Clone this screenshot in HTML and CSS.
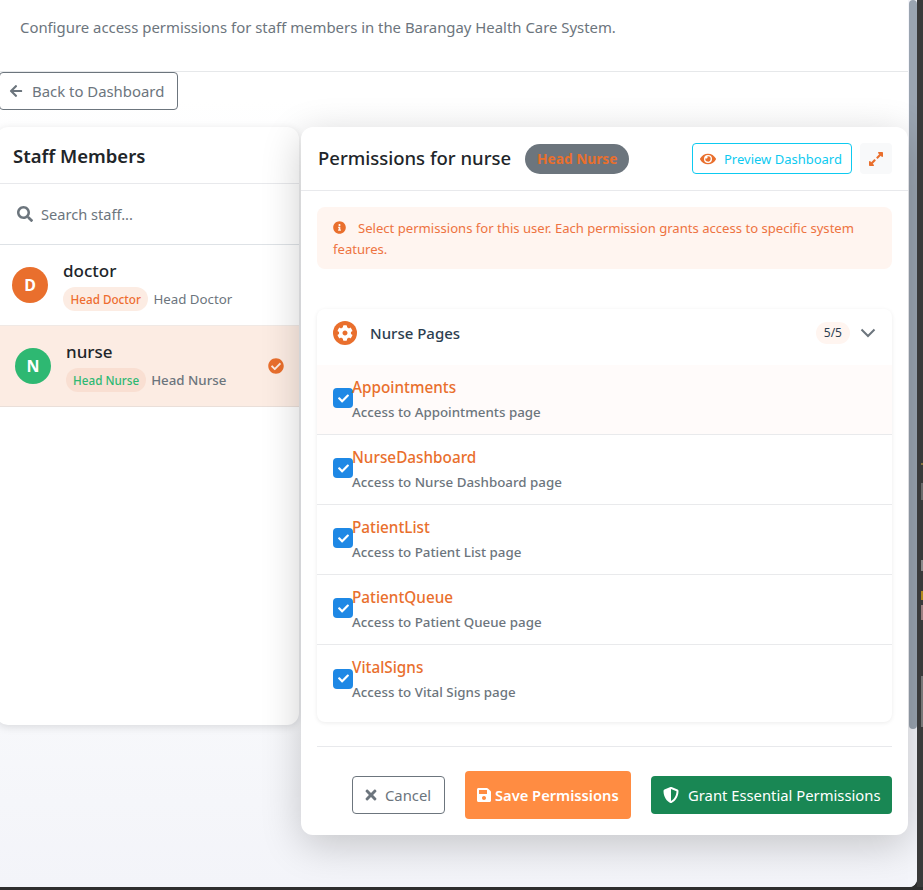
FILE: index.html
```html
<!doctype html>
<html lang="en">
<head>
<title>Staff Permissions</title>
<meta charset="utf-8">
<link rel="stylesheet" href="styles.css">
</head>
<body>

<svg class="sprite" xmlns="http://www.w3.org/2000/svg">
  <symbol id="i-back" viewBox="0 0 448 512"><path d="M257.5 445.1l-22.2 22.2c-9.4 9.4-24.6 9.4-33.9 0L7 273c-9.4-9.4-9.4-24.6 0-33.9L201.4 44.7c9.4-9.4 24.6-9.4 33.9 0l22.2 22.2c9.5 9.5 9.3 25-.4 34.3L136.6 216H424c13.3 0 24 10.7 24 24v32c0 13.3-10.7 24-24 24H136.6l120.5 114.8c9.8 9.3 10 24.8.4 34.3z"/></symbol>
  <symbol id="i-search" viewBox="0 0 512 512"><path d="M505 442.7L405.3 343c-4.5-4.5-10.6-7-17-7H372c27.6-35.3 44-79.7 44-128C416 93.1 322.9 0 208 0S0 93.1 0 208s93.1 208 208 208c48.3 0 92.7-16.4 128-44v16.3c0 6.4 2.5 12.5 7 17l99.7 99.7c9.4 9.4 24.6 9.4 33.9 0l28.3-28.3c9.4-9.4 9.4-24.6.1-34zM208 336c-70.7 0-128-57.2-128-128 0-70.7 57.2-128 128-128 70.7 0 128 57.2 128 128 0 70.7-57.2 128-128 128z"/></symbol>
  <symbol id="i-ok" viewBox="0 0 512 512"><path d="M504 256c0 136.967-111.033 248-248 248S8 392.967 8 256 119.033 8 256 8s248 111.033 248 248zM227.314 387.314l184-184c6.248-6.248 6.248-16.379 0-22.627l-22.627-22.627c-6.248-6.249-16.379-6.249-22.628 0L216 308.118l-70.059-70.059c-6.248-6.248-16.379-6.248-22.628 0l-22.627 22.627c-6.248 6.248-6.248 16.379 0 22.627l104 104c6.249 6.249 16.379 6.249 22.628.001z"/></symbol>
  <symbol id="i-info" viewBox="0 0 512 512"><path d="M256 8C119.043 8 8 119.083 8 256c0 136.997 111.043 248 248 248s248-111.003 248-248C504 119.083 392.957 8 256 8zm0 110c23.196 0 42 18.804 42 42s-18.804 42-42 42-42-18.804-42-42 18.804-42 42-42zm56 254c0 6.627-5.373 12-12 12h-88c-6.627 0-12-5.373-12-12v-24c0-6.627 5.373-12 12-12h12v-64h-12c-6.627 0-12-5.373-12-12v-24c0-6.627 5.373-12 12-12h64c6.627 0 12 5.373 12 12v100h12c6.627 0 12 5.373 12 12v24z"/></symbol>
  <symbol id="i-eye" viewBox="0 0 576 512"><path d="M572.52 241.4C518.29 135.59 410.93 64 288 64S57.68 135.64 3.48 241.41a32.35 32.35 0 0 0 0 29.19C57.71 376.41 165.07 448 288 448s230.32-71.64 284.52-177.41a32.35 32.35 0 0 0 0-29.19zM288 400a144 144 0 1 1 144-144 143.93 143.93 0 0 1-144 144zm0-240a95.31 95.31 0 0 0-25.31 3.79 47.85 47.85 0 0 1-66.9 66.9A95.78 95.78 0 1 0 288 160z"/></symbol>
  <symbol id="i-expand" viewBox="0 0 448 512"><path d="M212.686 315.314L120 408l32.922 31.029c15.12 15.12 4.412 40.971-16.97 40.971h-112C10.697 480 0 469.255 0 456V344c0-21.382 25.803-32.09 40.922-16.971L72 360l92.686-92.686c6.248-6.248 16.379-6.248 22.627 0l25.373 25.373c6.249 6.248 6.249 16.378 0 22.627zm22.628-118.628L328 104l-32.922-31.029C279.958 57.851 290.666 32 312.048 32h112C437.303 32 448 42.745 448 56v112c0 21.382-25.803 32.09-40.922 16.971L376 152l-92.686 92.686c-6.248 6.248-16.379 6.248-22.627 0l-25.373-25.373c-6.249-6.248-6.249-16.378 0-22.627z"/></symbol>
  <symbol id="i-cog" viewBox="0 0 512 512"><path d="M487.4 315.7l-42.6-24.6c4.3-23.2 4.3-47 0-70.2l42.6-24.6c4.9-2.8 7.1-8.6 5.5-14-11.1-35.6-30-67.8-54.7-94.6-3.8-4.1-10-5.1-14.8-2.3L380.8 110c-17.9-15.4-38.5-27.3-60.8-35.1V25.8c0-5.6-3.9-10.5-9.4-11.7-36.7-8.2-74.3-7.8-109.2 0-5.5 1.2-9.4 6.1-9.4 11.7V75c-22.2 7.9-42.8 19.8-60.8 35.1L88.7 85.5c-4.9-2.8-11-1.9-14.8 2.3-24.7 26.7-43.6 58.9-54.7 94.6-1.7 5.4.6 11.2 5.5 14L67.3 221c-4.3 23.2-4.3 47 0 70.2l-42.6 24.6c-4.9 2.8-7.1 8.6-5.5 14 11.1 35.6 30 67.8 54.7 94.6 3.8 4.1 10 5.1 14.8 2.3l42.6-24.6c17.9 15.4 38.5 27.3 60.8 35.1v49.2c0 5.6 3.9 10.5 9.4 11.7 36.7 8.2 74.3 7.8 109.2 0 5.5-1.2 9.4-6.1 9.4-11.7v-49.2c22.2-7.9 42.8-19.8 60.8-35.1l42.6 24.6c4.9 2.8 11 1.9 14.8-2.3 24.7-26.7 43.6-58.9 54.7-94.6 1.5-5.5-.7-11.3-5.6-14.1zM256 336c-44.1 0-80-35.9-80-80s35.9-80 80-80 80 35.9 80 80-35.9 80-80 80z"/></symbol>
  <symbol id="i-check" viewBox="0 0 512 512"><path d="M173.898 439.404l-166.4-166.4c-9.997-9.997-9.997-26.206 0-36.204l36.203-36.204c9.997-9.998 26.207-9.998 36.204 0L192 312.69 432.095 72.596c9.997-9.997 26.207-9.997 36.204 0l36.203 36.204c9.997 9.997 9.997 26.206 0 36.204l-294.4 294.401c-9.998 9.997-26.207 9.997-36.204-.001z"/></symbol>
  <symbol id="i-times" viewBox="0 0 352 512"><path d="M242.72 256l100.07-100.07c12.28-12.28 12.28-32.19 0-44.48l-22.24-22.24c-12.28-12.28-32.19-12.28-44.48 0L176 189.28 75.93 89.21c-12.28-12.28-32.19-12.28-44.48 0L9.21 111.45c-12.28 12.28-12.28 32.19 0 44.48L109.28 256 9.21 356.07c-12.28 12.28-12.28 32.19 0 44.48l22.24 22.24c12.28 12.28 32.2 12.28 44.48 0L176 322.72l100.07 100.07c12.28 12.28 32.2 12.28 44.48 0l22.24-22.24c12.28-12.28 12.28-32.19 0-44.48L242.72 256z"/></symbol>
  <symbol id="i-save" viewBox="0 0 448 512"><path d="M433.941 129.941l-83.882-83.882A48 48 0 0 0 316.118 32H48C21.49 32 0 53.49 0 80v352c0 26.51 21.49 48 48 48h352c26.51 0 48-21.49 48-48V163.882a48 48 0 0 0-14.059-33.941zM224 416c-35.346 0-64-28.654-64-64 0-35.346 28.654-64 64-64s64 28.654 64 64c0 35.346-28.654 64-64 64zm96-304.52V212c0 6.627-5.373 12-12 12H76c-6.627 0-12-5.373-12-12V108c0-6.627 5.373-12 12-12h228.52c3.183 0 6.235 1.264 8.485 3.515l3.48 3.48A11.996 11.996 0 0 1 320 111.48z"/></symbol>
  <symbol id="i-shield" viewBox="0 0 512 512"><path d="M466.5 83.7l-192-80a48.15 48.15 0 0 0-36.9 0l-192 80C27.7 91.1 16 108.6 16 128c0 198.5 114.5 335.7 221.5 380.3 11.8 4.9 25.1 4.9 36.9 0C360.1 472.6 496 349.3 496 128c0-19.4-11.7-36.9-29.5-44.3zM256.1 446.3l-.1-381 175.9 73.3c-3.3 151.4-82.1 261.1-175.8 307.7z"/></symbol>
</svg>

<div id="frame">
  <div id="win">

    <div id="top">
      <p>Configure access permissions for staff members in the Barangay Health Care System.</p>
    </div>

    <a class="btn-back" href="#"><svg class="ico"><use href="#i-back"/></svg>Back to Dashboard</a>

    <div id="cols">

      <div id="staff">
        <h2>Staff Members</h2>
        <div class="search">
          <svg class="ico"><use href="#i-search"/></svg>
          <input type="text" placeholder="Search staff...">
        </div>
        <div class="person">
          <span class="avatar orange">D</span>
          <div class="who">
            <b>doctor</b>
            <div class="roles"><span class="pill">Head Doctor</span><span class="role">Head Doctor</span></div>
          </div>
        </div>
        <div class="person on">
          <span class="avatar green">N</span>
          <div class="who">
            <b>nurse</b>
            <div class="roles"><span class="pill">Head Nurse</span><span class="role">Head Nurse</span></div>
          </div>
          <svg class="ok"><use href="#i-ok"/></svg>
        </div>
      </div>

      <div id="perms">
        <div class="perms-head">
          <h3>Permissions for nurse</h3>
          <span class="tag">Head Nurse</span>
          <a class="btn-preview" href="#"><svg class="ico"><use href="#i-eye"/></svg>Preview Dashboard</a>
          <a class="btn-expand" href="#"><svg class="ico"><use href="#i-expand"/></svg></a>
        </div>
        <div class="perms-body">
          <div class="note"><svg class="ico"><use href="#i-info"/></svg>Select permissions for this user. Each permission grants access to specific system features.</div>

          <div class="group">
            <div class="group-head">
              <span class="gear"><svg class="ico"><use href="#i-cog"/></svg></span>
              <span class="group-name">Nurse Pages</span>
              <span class="count">5/5</span>
              <svg class="chev" viewBox="0 0 16 10"><polyline points="1.5,1.5 8,8 14.5,1.5"/></svg>
            </div>
            <div class="item first">
              <span class="tick"><svg class="ico"><use href="#i-check"/></svg></span>
              <div><h4>Appointments</h4><small>Access to Appointments page</small></div>
            </div>
            <div class="item">
              <span class="tick"><svg class="ico"><use href="#i-check"/></svg></span>
              <div><h4>NurseDashboard</h4><small>Access to Nurse Dashboard page</small></div>
            </div>
            <div class="item">
              <span class="tick"><svg class="ico"><use href="#i-check"/></svg></span>
              <div><h4>PatientList</h4><small>Access to Patient List page</small></div>
            </div>
            <div class="item">
              <span class="tick"><svg class="ico"><use href="#i-check"/></svg></span>
              <div><h4>PatientQueue</h4><small>Access to Patient Queue page</small></div>
            </div>
            <div class="item">
              <span class="tick"><svg class="ico"><use href="#i-check"/></svg></span>
              <div><h4>VitalSigns</h4><small>Access to Vital Signs page</small></div>
            </div>
          </div>

          <div class="actions">
            <a class="btn-cancel" href="#"><svg class="ico"><use href="#i-times"/></svg>Cancel</a>
            <a class="btn-save" href="#"><svg class="ico"><use href="#i-save"/></svg>Save Permissions</a>
            <a class="btn-grant" href="#"><svg class="ico"><use href="#i-shield"/></svg>Grant Essential Permissions</a>
          </div>
        </div>
      </div>

    </div>
  </div>

  <div id="bar"><div id="thumb"></div></div>
</div>

<div id="strip">
  <i class="chip c1"></i>
  <i class="chip c2"></i>
  <i class="chip c3"></i>
  <i class="chip c4"></i>
  <i class="chip c5"></i>
  <i class="chip c6"></i>
</div>

</body>
</html>
```

FILE: styles.css
```css
* {
  box-sizing: border-box;
}
html, body {
  height: 100%;
}
body {
  display: flex;
  margin: 0;
  background: #2e2e2e;
  color: #212529;
  font: 14px/20px "Noto Sans", Arial, sans-serif;
  overflow: hidden;
}
a {
  text-decoration: none;
}
.sprite {
  display: none;
}
.ico {
  display: block;
  fill: currentColor;
  flex: none;
}

#frame {
  display: flex;
  width: 917px;
  height: 887px;
  border-radius: 0 0 8px 0;
  overflow: hidden;
  background: #f4f5fa;
  flex: none;
}
#win {
  width: 908px;
  flex: none;
  background: linear-gradient(#fff 100px, #f7f8fb 300px, #f7f8fb 720px, #f3f4f9 887px);
}
#bar {
  width: 9px;
  flex: none;
  padding-left: 1px;
  background: #f4f5fa;
}
#thumb {
  height: 729px;
  background: #9aa4b0;
  border-radius: 4px;
}

#strip {
  flex: 1;
  height: 887px;
  padding: 463px 0 0 4px;
  background: #3a3a3a;
}
.chip {
  display: block;
}
.c1 { height: 2px; background: #8a7440; }
.c2 { height: 17px; margin-top: 18px; background: #6b6b6b; }
.c3 { height: 11px; margin-top: 60px; background: #8a8a8a; }
.c4 { height: 9px; margin-top: 20px; background: #b08a1e; }
.c5 { height: 15px; margin-top: 5px; background: #9c7f80; }
.c6 { height: 51px; margin-top: 56px; background: #777; }

#top {
  height: 72px;
  padding: 17px 20px 0;
  background: #fff;
  border-bottom: solid 1px #e6e8ea;
}
#top p {
  margin: 0;
  color: #6c757d;
  font-size: 14.9px;
}

.btn-back {
  display: flex;
  align-items: center;
  gap: 9px;
  width: 179px;
  height: 38px;
  margin-left: -1px;
  padding-left: 9px;
  color: #6c757d;
  font-size: 14.9px;
  border: solid 1px #6c757d;
  border-radius: 4px;
}
.btn-back .ico {
  width: 14px;
  height: 14px;
}

#cols {
  display: flex;
  align-items: flex-start;
  margin-top: 17px;
}

#staff {
  width: 303px;
  height: 598px;
  margin-left: -4px;
  background: #fff;
  border-radius: 12px;
  box-shadow: 0 2px 8px rgba(0,0,0,0.12);
  flex: none;
}
#staff h2 {
  margin: 0;
  height: 57px;
  padding: 0 17px;
  font-size: 18.5px;
  font-weight: 600;
  line-height: 57px;
  border-bottom: solid 1px #e8e9ec;
}
.search {
  display: flex;
  align-items: center;
  gap: 8px;
  height: 61px;
  padding: 0 21px;
  color: #6c757d;
  border-bottom: solid 1px #dee2e6;
}
.search .ico {
  width: 16px;
  height: 16px;
}
.search input {
  flex: 1;
  min-width: 0;
  padding: 0;
  border: 0;
  outline: 0;
  background: none;
  font: 14.6px "Noto Sans", Arial, sans-serif;
}
.search input::placeholder {
  color: #6c757d;
  opacity: 1;
}
.person {
  display: flex;
  align-items: center;
  gap: 15px;
  height: 81px;
  padding: 0 16px;
  border-bottom: solid 1px #f0e9e5;
}
.person.on {
  padding: 0 15px 0 19px;
  background: #fcece3;
  border-bottom-color: #eadfd9;
}
.avatar {
  display: flex;
  align-items: center;
  justify-content: center;
  width: 36px;
  height: 36px;
  color: #fff;
  font-size: 16px;
  font-weight: 700;
  border-radius: 50%;
  flex: none;
}
.orange {
  background: #e96f2d;
}
.green {
  background: #2eb872;
}
.who {
  flex: 1;
}
.who b {
  display: block;
  font-size: 17px;
  font-weight: 500;
  line-height: 24px;
}
.roles {
  display: flex;
  align-items: center;
  gap: 5px;
  margin-top: 4px;
}
.pill {
  height: 24px;
  padding: 0 7.5px;
  color: #ee6c30;
  background: #fcece3;
  font-size: 11.7px;
  font-weight: 500;
  line-height: 24px;
  border-radius: 12px;
}
.on .pill {
  padding: 0 7px;
  color: #2eb872;
  background: #f9dfd2;
}
.role {
  color: #6c757d;
  font-size: 13.3px;
}
.on .role {
  font-weight: 500;
}
.ok {
  width: 16px;
  height: 16px;
  fill: #e96f2d;
  flex: none;
}

#perms {
  position: relative;
  width: 607px;
  height: 708px;
  margin-left: 2px;
  background: #fff;
  border-radius: 12px;
  box-shadow: 0 10px 40px rgba(0,0,0,0.2);
  flex: none;
}
.perms-head {
  display: flex;
  align-items: center;
  height: 64px;
  padding: 0 16px 0 17px;
  border-bottom: solid 1px #e8e9ec;
}
.perms-head h3 {
  margin: 0 0 2px;
  font-size: 18.5px;
  font-weight: 500;
}
.tag {
  height: 30px;
  margin-left: 14px;
  padding: 0 12px;
  color: #e96f2d;
  background: #6c757d;
  font-size: 13.7px;
  font-weight: 700;
  line-height: 30px;
  border-radius: 15px;
}
.btn-preview {
  display: flex;
  align-items: center;
  gap: 8px;
  width: 160px;
  height: 31px;
  margin-left: auto;
  padding: 0 7px;
  color: #0dcaf0;
  font-size: 13px;
  white-space: nowrap;
  border: solid 1px #0dcaf0;
  border-radius: 4px;
}
.btn-preview .ico {
  width: 16px;
  height: 16px;
  color: #e96f2d;
}
.btn-expand {
  display: flex;
  align-items: center;
  justify-content: center;
  width: 32px;
  height: 31px;
  margin-left: 8px;
  color: #e96f2d;
  background: #f8f9fa;
  border-radius: 4px;
}
.btn-expand .ico {
  width: 14px;
  height: 16px;
}

.perms-body {
  padding: 16px 16px 0;
}
.note {
  height: 62px;
  padding: 11px 16px;
  color: #ee7341;
  background: #fff5f0;
  font-size: 13.1px;
  line-height: 21px;
  border-radius: 8px;
}
.note .ico {
  display: inline-block;
  width: 13px;
  height: 13px;
  margin-right: 12px;
  color: #e96f2d;
  vertical-align: -1px;
}

.group {
  height: 413px;
  margin-top: 40px;
  background: #fff;
  border-radius: 8px;
  box-shadow: 0 1px 4px rgba(0,0,0,0.08);
}
.group-head {
  display: flex;
  align-items: center;
  height: 56px;
  padding: 0 16px 8px;
}
.gear {
  display: flex;
  align-items: center;
  justify-content: center;
  width: 24px;
  height: 24px;
  color: #fff;
  background: #e96f2d;
  border-radius: 50%;
}
.gear .ico {
  width: 16px;
  height: 16px;
}
.group-name {
  margin-left: 13px;
  color: #2c3e50;
  font-size: 15px;
  font-weight: 500;
}
.count {
  margin-left: auto;
  height: 22px;
  padding: 0 8px;
  color: #2c3e50;
  background: #fff5f0;
  font-size: 12px;
  line-height: 22px;
  border-radius: 11px;
}
.chev {
  width: 16px;
  height: 10px;
  margin-left: 10px;
  fill: none;
  stroke: #6c757d;
  stroke-width: 2;
}
.item {
  display: flex;
  align-items: center;
  height: 70px;
  padding-left: 16px;
  border-bottom: solid 1px #e9eaec;
}
.item:last-child {
  border-bottom: 0;
}
.item.first {
  background: #fffbfa;
}
.item h4 {
  margin: 0 0 1px;
  color: #e96f2d;
  font-size: 15.3px;
  font-weight: 500;
  line-height: 23px;
}
.item small {
  display: block;
  color: #6c757d;
  font-size: 13.35px;
  font-weight: 500;
  line-height: 24px;
}
.tick {
  display: flex;
  align-items: center;
  justify-content: center;
  width: 20px;
  height: 20px;
  margin: 0 -1px 3px 0;
  color: #fff;
  background: #1e88e5;
  border-radius: 4px;
  flex: none;
}
.tick .ico {
  width: 11px;
  height: 11px;
}

.actions {
  display: flex;
  align-items: center;
  justify-content: flex-end;
  gap: 20px;
  margin-top: 24px;
  padding-top: 24px;
  border-top: solid 1px #e8e9ec;
}
.actions a {
  display: flex;
  align-items: center;
  height: 38px;
  font-size: 14.8px;
  border-radius: 4px;
}
.btn-cancel {
  gap: 8px;
  width: 93px;
  padding: 0 12px;
  color: #6c757d;
  border: solid 1px #6c757d;
}
.btn-cancel .ico {
  width: 12px;
  height: 16px;
}
.actions .btn-save {
  gap: 4px;
  width: 166px;
  height: 48px;
  padding: 0 12px;
  color: #fff;
  background: #ff8c42;
  font-size: 14.7px;
  font-weight: 600;
  white-space: nowrap;
}
.btn-save .ico {
  width: 14px;
  height: 16px;
}
.btn-grant {
  gap: 9px;
  width: 241px;
  padding: 0 12px;
  color: #fff;
  background: #198754;
  white-space: nowrap;
}
.btn-grant .ico {
  width: 16px;
  height: 16px;
}
```
